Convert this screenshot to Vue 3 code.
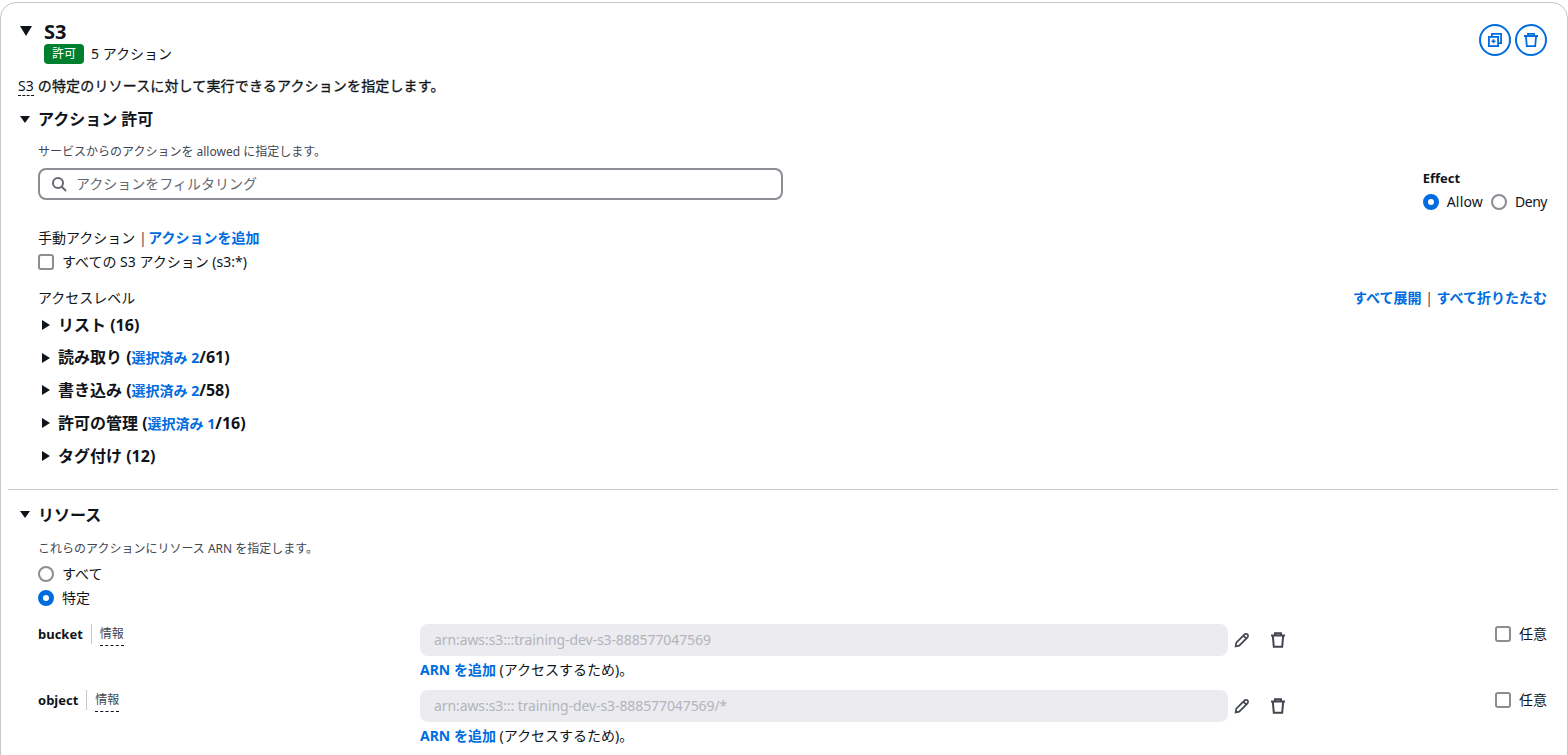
<script setup>
const levels = [
  { name: 'リスト (16)' },
  { name: '読み取り (', sel: '選択済み 2', rest: '/61)' },
  { name: '書き込み (', sel: '選択済み 2', rest: '/58)' },
  { name: '許可の管理 (', sel: '選択済み 1', rest: '/16)' },
  { name: 'タグ付け (12)' },
]
const rows = [
  { name: 'bucket', arn: 'arn:aws:s3:::training-dev-s3-888577047569' },
  { name: 'object', arn: 'arn:aws:s3::: training-dev-s3-888577047569/*' },
]
</script>

<template>
  <div class="page">
    <section class="card">
      <div class="top">
        <div class="head">
          <span class="tri big"></span>
          <div>
            <h2>S3</h2>
            <div class="sub"><span class="badge">許可</span><span>5 アクション</span></div>
          </div>
        </div>
        <div class="round-btns">
          <button class="round" aria-label="複製">
            <svg viewBox="0 0 14 14" width="14" height="14" fill="none" stroke="#006ce0" stroke-width="1.8">
              <rect x="0.9" y="3.9" width="9.2" height="9.2" />
              <path d="M3.9 3.5V0.9h9.2v9.2h-2.6" />
              <path d="M5.5 6.2v4M3.5 8.2h4" stroke-width="1.6" />
            </svg>
          </button>
          <button class="round" aria-label="削除">
            <svg viewBox="0 0 14 14" width="14" height="14" fill="none" stroke="#006ce0" stroke-width="1.8">
              <path d="M0 3h14M4 3V0.9h6V3M1.9 3l0.9 10.1h8.4l0.9-10.1" />
            </svg>
          </button>
        </div>
      </div>

      <p class="desc"><span class="dotted">S3</span> の特定のリソースに対して実行できるアクションを指定します。</p>

      <h3 class="sec"><span class="tri"></span>アクション 許可</h3>
      <div class="body actions">
        <div class="filter-row">
          <div class="filter-col">
            <p class="hint">サービスからのアクションを allowed に指定します。</p>
            <div class="filter">
              <svg viewBox="0 0 16 16" width="16" height="16" fill="none" stroke="#656871" stroke-width="2">
                <circle cx="7" cy="7" r="5" />
                <path d="M10.8 10.8L15 15" />
              </svg>
              <span>アクションをフィルタリング</span>
            </div>
          </div>
          <div class="effect">
            <div class="effect-title">Effect</div>
            <div class="effect-opts">
              <label class="opt allow"><span class="radio on"></span>Allow</label>
              <label class="opt deny"><span class="radio"></span>Deny</label>
            </div>
          </div>
        </div>

        <div class="manual">手動アクション <span class="sep tight">|</span> <a>アクションを追加</a></div>
        <label class="check-line"><span class="check"></span>すべての S3 アクション (s3:*)</label>

        <div class="level-head">
          <span>アクセスレベル</span>
          <span class="links"><a>すべて展開</a> <span class="sep">|</span> <a>すべて折りたたむ</a></span>
        </div>
        <ul class="levels">
          <li v-for="l in levels" :key="l.name">
            <span class="tri side"></span>
            <span>{{ l.name }}<a v-if="l.sel" class="sel">{{ l.sel }}</a>{{ l.rest }}</span>
          </li>
        </ul>
      </div>

      <hr class="divider" />

      <h3 class="sec res"><span class="tri"></span>リソース</h3>
      <div class="body">
        <p class="hint res-hint">これらのアクションにリソース ARN を指定します。</p>
        <label class="res-opt"><span class="radio"></span>すべて</label>
        <label class="res-opt"><span class="radio on"></span>特定</label>

        <div v-for="r in rows" :key="r.name" class="arn-row">
          <div class="arn-label">
            <b>{{ r.name }}</b><span class="info">情報</span>
          </div>
          <div class="arn-main">
            <div class="arn-line">
              <div class="arn-input">{{ r.arn }}</div>
              <svg class="edit" viewBox="0 0 16 16" width="16" height="16" fill="none" stroke="#424650" stroke-width="1.7">
                <path d="M1.7 14.3l.6-3.6 8.3-8.3a1.9 1.9 0 0 1 2.9 2.9l-8.3 8.3z" />
                <path d="M9.4 3.7l2.9 2.9" />
              </svg>
              <svg class="del" viewBox="0 0 16 16" width="16" height="16" fill="none" stroke="#424650" stroke-width="2">
                <path d="M1 3.5h14M5 3.5V1.2h6v2.3M2.8 3.5l1 11.3h8.4l1-11.3" />
              </svg>
            </div>
            <div class="arn-add"><a>ARN を追加</a> (アクセスするため)。</div>
          </div>
          <label class="any"><span class="check"></span>任意</label>
        </div>
      </div>
    </section>
  </div>
</template>

<style>
html, body { margin: 0; background: #fff; overflow: hidden; }
</style>

<style scoped>
.page {
  height: 755px;
  overflow: hidden;
  padding-top: 2px;
  box-sizing: border-box;
  font-family: "Noto Sans", "Noto Sans CJK JP", sans-serif;
  font-size: 14px;
  line-height: 20px;
  color: #0f141a;
}
.card {
  box-sizing: border-box;
  width: 1568px;
  height: 800px;
  border: 1px solid #c6c6cd;
  border-radius: 16px;
  padding: 17px 20px 0 19px;
  position: relative;
}
a { color: #006ce0; font-weight: 700; }
.sep { color: #424650; }
.sep.tight { margin-right: -2px; }
.top { display: flex; justify-content: space-between; }
.head { display: flex; align-items: flex-start; }
.tri { display: inline-block; width: 0; height: 0; }
.tri.big { border-left: 6.5px solid transparent; border-right: 6.5px solid transparent; border-top: 10px solid #0f141a; margin-top: 6px; margin-right: 12px; }
h2 { margin: 0; font-size: 20px; line-height: 24px; font-weight: 700; }
.sub { display: flex; align-items: center; gap: 7px; }
.badge { background: #00802f; color: #fff; border-radius: 4px; width: 40px; height: 20px; font-size: 12px; display: flex; align-items: center; justify-content: center; }
.round-btns { display: flex; gap: 4px; margin-top: 4px; }
.round { width: 32px; height: 32px; border: 2px solid #006ce0; border-radius: 50%; background: #fff; padding: 0; display: flex; align-items: center; justify-content: center; }
.desc { margin: 12px 0 0 -2px; height: 20px; letter-spacing: 0.15px; -webkit-text-stroke: 0.3px #0f141a; }
.dotted { border-bottom: 1px dashed #0f141a; -webkit-text-stroke: 0; }
.sec { margin: 13px 0 0; display: flex; align-items: center; font-size: 16px; line-height: 20px; font-weight: 700; }
.sec .tri { border-left: 5.5px solid transparent; border-right: 5.5px solid transparent; border-top: 7.5px solid #0f141a; margin-right: 8px; }
.sec.res { margin-top: 15px; }
.body { padding-left: 18px; }
.hint { margin: 0; font-size: 12px; line-height: 16px; color: #424650; }
.filter-row { display: flex; justify-content: space-between; margin-top: 15px; }
.filter-col { width: 745px; }
.filter { margin-top: 8px; box-sizing: border-box; height: 32px; border: 2px solid #8c8c94; border-radius: 8px; display: flex; align-items: center; gap: 9px; padding-left: 11px; color: #656871; }
.effect { margin-top: 25px; }
.effect-title { font-size: 13px; font-weight: 700; line-height: 18px; }
.effect-opts { display: flex; gap: 8px; margin-top: 5px; }
.opt { display: flex; align-items: center; gap: 8px; }
.opt.allow { letter-spacing: 0.2px; }
.opt.deny { letter-spacing: -0.5px; }
.radio { box-sizing: border-box; width: 16px; height: 16px; border-radius: 50%; border: 2px solid #8c8c94; background: #fff; flex: none; }
.radio.on { border: 5px solid #006ce0; }
.manual { margin-top: 16px; line-height: 20px; }
.check-line { display: flex; align-items: center; gap: 8px; margin-top: 4px; height: 20px; }
.check { box-sizing: border-box; width: 16px; height: 16px; border: 2px solid #8c8c94; border-radius: 3px; flex: none; }
.level-head { display: flex; justify-content: space-between; margin-top: 16px; }
.levels { list-style: none; margin: 1px 0 0; padding: 0; }
.levels li { display: flex; align-items: center; height: 32.6px; font-size: 16px; font-weight: 700; }
.levels a.sel { font-size: 14px; }
.tri.side { border-top: 5px solid transparent; border-bottom: 5px solid transparent; border-left: 8px solid #0f141a; margin: 0 8px 0 4px; }
.divider { border: 0; border-top: 1px solid #c6c6cd; margin: 17px -11px 0 -12px; }
.res-hint { margin-top: 16px; }
.res-opt { display: flex; align-items: center; gap: 8px; height: 24px; }
.res-opt:first-of-type { margin-top: 5px; }
.arn-row { display: flex; align-items: flex-start; height: 66px; }
.arn-row:first-of-type { margin-top: 14px; }
.arn-label { width: 382px; flex: none; display: flex; align-items: center; height: 20px; }
.arn-label b { font-size: 13px; font-weight: 700; }
.info { margin-left: 8px; padding-left: 8px; border-left: 1px solid #c6c6cd; font-size: 12px; color: #424650; position: relative; }
.info::after { content: ""; position: absolute; left: 8px; right: 0; bottom: -2px; border-bottom: 1px dashed #0f141a; }
.arn-main { width: 868px; flex: none; }
.arn-line { display: flex; align-items: center; }
.arn-input { width: 808px; height: 32px; flex: none; box-sizing: border-box; background: #ebebf0; border-radius: 8px; padding-left: 14px; line-height: 32px; color: #b4b4bb; letter-spacing: -0.09px; }
.edit { margin-left: 6px; margin-top: 1px; }
.del { margin-left: 20px; margin-top: 1px; }
.arn-add { margin-top: 4px; }
.any { margin-left: auto; display: flex; align-items: center; gap: 8px; height: 20px; }
</style>
